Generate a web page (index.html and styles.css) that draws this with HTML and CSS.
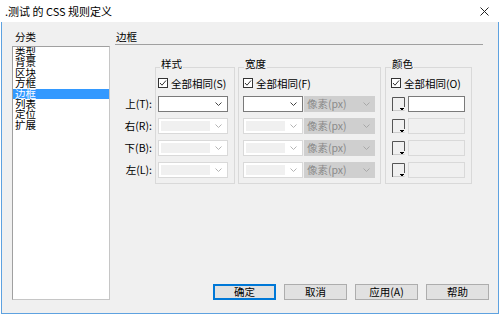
FILE: index.html
```html
<!DOCTYPE html>
<html lang="zh-CN">
<head>
  <meta charset="UTF-8" />
  <title>.测试 的 CSS 规则定义</title>
  <link rel="stylesheet" href="styles.css">
</head>
<body>

  <div class="window">
    <div class="titlebar">
      <span class="title">.测试 的 CSS 规则定义</span>
      <svg class="close" width="9" height="9" viewBox="0 0 9 9"><path d="M0.5 0.5 L8.5 8.5 M8.5 0.5 L0.5 8.5" stroke="#222" fill="none"/></svg>
    </div>

    <div class="content">
      <!-- category list -->
      <div class="category">
        <div class="cat-label">分类</div>
        <ul class="cat-list">
          <li>类型</li>
          <li>背景</li>
          <li>区块</li>
          <li>方框</li>
          <li class="selected">边框</li>
          <li>列表</li>
          <li>定位</li>
          <li>扩展</li>
        </ul>
      </div>

      <div class="panel">
        <div class="panel-title">边框</div>

        <div class="groups">
          <div class="side-labels">
            <div>上(T):</div>
            <div>右(R):</div>
            <div>下(B):</div>
            <div>左(L):</div>
          </div>

          <!-- style -->
          <fieldset class="group g-style">
            <legend>样式</legend>
            <div class="same">
              <svg class="check" width="10" height="10" viewBox="0 0 10 10"><rect x="0.5" y="0.5" width="9" height="9" fill="#fff" stroke="#333"/><path d="M2 5 L4 7.2 L8 2.5" fill="none" stroke="#333"/></svg>
              全部相同(S)
            </div>
            <div class="rows">
              <div class="row">
                <div class="select sel-style"><svg class="chev" width="7" height="4" viewBox="0 0 7 4"><path d="M0.5 0.5 L3.5 3.5 L6.5 0.5" fill="none" stroke="currentColor"/></svg></div>
              </div>
              <div class="row">
                <div class="select sel-style off"><span class="fill"></span><svg class="chev" width="7" height="4" viewBox="0 0 7 4"><path d="M0.5 0.5 L3.5 3.5 L6.5 0.5" fill="none" stroke="currentColor"/></svg></div>
              </div>
              <div class="row">
                <div class="select sel-style off"><span class="fill"></span><svg class="chev" width="7" height="4" viewBox="0 0 7 4"><path d="M0.5 0.5 L3.5 3.5 L6.5 0.5" fill="none" stroke="currentColor"/></svg></div>
              </div>
              <div class="row">
                <div class="select sel-style off"><span class="fill"></span><svg class="chev" width="7" height="4" viewBox="0 0 7 4"><path d="M0.5 0.5 L3.5 3.5 L6.5 0.5" fill="none" stroke="currentColor"/></svg></div>
              </div>
            </div>
          </fieldset>

          <!-- width -->
          <fieldset class="group g-width">
            <legend>宽度</legend>
            <div class="same">
              <svg class="check" width="10" height="10" viewBox="0 0 10 10"><rect x="0.5" y="0.5" width="9" height="9" fill="#fff" stroke="#333"/><path d="M2 5 L4 7.2 L8 2.5" fill="none" stroke="#333"/></svg>
              全部相同(F)
            </div>
            <div class="rows">
              <div class="row">
                <div class="select sel-width"><svg class="chev" width="7" height="4" viewBox="0 0 7 4"><path d="M0.5 0.5 L3.5 3.5 L6.5 0.5" fill="none" stroke="currentColor"/></svg></div>
                <div class="unit">像素(px)<svg class="chev" width="7" height="4" viewBox="0 0 7 4"><path d="M0.5 0.5 L3.5 3.5 L6.5 0.5" fill="none" stroke="currentColor"/></svg></div>
              </div>
              <div class="row">
                <div class="select sel-width off"><span class="fill"></span><svg class="chev" width="7" height="4" viewBox="0 0 7 4"><path d="M0.5 0.5 L3.5 3.5 L6.5 0.5" fill="none" stroke="currentColor"/></svg></div>
                <div class="unit">像素(px)<svg class="chev" width="7" height="4" viewBox="0 0 7 4"><path d="M0.5 0.5 L3.5 3.5 L6.5 0.5" fill="none" stroke="currentColor"/></svg></div>
              </div>
              <div class="row">
                <div class="select sel-width off"><span class="fill"></span><svg class="chev" width="7" height="4" viewBox="0 0 7 4"><path d="M0.5 0.5 L3.5 3.5 L6.5 0.5" fill="none" stroke="currentColor"/></svg></div>
                <div class="unit">像素(px)<svg class="chev" width="7" height="4" viewBox="0 0 7 4"><path d="M0.5 0.5 L3.5 3.5 L6.5 0.5" fill="none" stroke="currentColor"/></svg></div>
              </div>
              <div class="row">
                <div class="select sel-width off"><span class="fill"></span><svg class="chev" width="7" height="4" viewBox="0 0 7 4"><path d="M0.5 0.5 L3.5 3.5 L6.5 0.5" fill="none" stroke="currentColor"/></svg></div>
                <div class="unit">像素(px)<svg class="chev" width="7" height="4" viewBox="0 0 7 4"><path d="M0.5 0.5 L3.5 3.5 L6.5 0.5" fill="none" stroke="currentColor"/></svg></div>
              </div>
            </div>
          </fieldset>

          <!-- color -->
          <fieldset class="group g-color">
            <legend>颜色</legend>
            <div class="same">
              <svg class="check" width="10" height="10" viewBox="0 0 10 10"><rect x="0.5" y="0.5" width="9" height="9" fill="#fff" stroke="#333"/><path d="M2 5 L4 7.2 L8 2.5" fill="none" stroke="#333"/></svg>
              全部相同(O)
            </div>
            <div class="rows">
              <div class="row">
                <svg class="swatch" width="15" height="16" viewBox="0 0 15 16"><path d="M1.5 15 V1.5 H13.5 V11" fill="none" stroke="#555"/><path d="M2 14.5 H13.5" stroke="#ccc"/><path d="M9 12.5 H13 M10 13.5 H12" stroke="#000"/></svg>
                <div class="cfield"></div>
              </div>
              <div class="row">
                <svg class="swatch" width="15" height="16" viewBox="0 0 15 16"><path d="M1.5 15 V1.5 H13.5 V11" fill="none" stroke="#555"/><path d="M2 14.5 H13.5" stroke="#ccc"/><path d="M9 12.5 H13 M10 13.5 H12" stroke="#000"/></svg>
                <div class="cfield off"></div>
              </div>
              <div class="row">
                <svg class="swatch" width="15" height="16" viewBox="0 0 15 16"><path d="M1.5 15 V1.5 H13.5 V11" fill="none" stroke="#555"/><path d="M2 14.5 H13.5" stroke="#ccc"/><path d="M9 12.5 H13 M10 13.5 H12" stroke="#000"/></svg>
                <div class="cfield off"></div>
              </div>
              <div class="row">
                <svg class="swatch" width="15" height="16" viewBox="0 0 15 16"><path d="M1.5 15 V1.5 H13.5 V11" fill="none" stroke="#555"/><path d="M2 14.5 H13.5" stroke="#ccc"/><path d="M9 12.5 H13 M10 13.5 H12" stroke="#000"/></svg>
                <div class="cfield off"></div>
              </div>
            </div>
          </fieldset>
        </div>

        <div class="actions">
          <button class="default">确定</button>
          <button>取消</button>
          <button>应用(A)</button>
          <button>帮助</button>
        </div>
      </div>
    </div>
  </div>

</body>
</html>
```

FILE: styles.css
```css
/* Page */
body {
  margin: 0;
  background: #fff;
  font-family: "Noto Sans CJK SC", "Liberation Sans", sans-serif;
  font-size: 10.5px;
  color: #000;
}

* {
  box-sizing: border-box;
}

/* Dialog window */
.window {
  width: 498px;
  height: 314px;
  margin-left: 1px;
  display: flex;
  flex-direction: column;
}

.titlebar {
  height: 22px;
  flex: none;
  background: #fff;
  display: flex;
  align-items: center;
  justify-content: space-between;
  padding: 0 10px 0 4px;
}

.title {
  font-size: 11px;
  line-height: 14px;
}

.content {
  flex: 1;
  display: flex;
  background: #f0f0f0;
  border: 1px solid #5ea2e0;
  border-top: none;
  padding: 9px 9px 13px 10px;
}

/* Category list on the left */
.category {
  width: 98px;
  display: flex;
  flex-direction: column;
}

.cat-label {
  line-height: 12px;
  padding-left: 3px;
  margin-bottom: 3px;
}

.cat-list {
  flex: 1;
  margin: 0;
  padding: 0;
  list-style: none;
  background: #fff;
  border: 1px solid;
  border-color: #a0a0a0 #c6c6c6 #c6c6c6 #a0a0a0;
}

.cat-list li {
  height: 10.4px;
  line-height: 10.4px;
  padding-left: 2px;
}

.cat-list li.selected {
  background: #3399ff;
  color: #fff;
}

/* Right panel */
.panel {
  flex: 1;
  margin-left: 5px;
  display: flex;
  flex-direction: column;
}

.panel-title {
  line-height: 12px;
  padding: 0 0 1px 1px;
  margin-right: 6px;
  border-bottom: 1px solid #a0a0a0;
}

.groups {
  display: flex;
  margin-top: 13px;
}

.side-labels {
  width: 40px;
  padding: 38px 3px 0 0;
  display: flex;
  flex-direction: column;
  gap: 6px;
  text-align: right;
}

.side-labels div {
  height: 16px;
  line-height: 16px;
}

/* Group boxes */
.group {
  margin: 0;
  min-width: 0;
  border: 1px solid #d9d9d9;
  padding: 1px 4px 5px 4px;
}

.group legend {
  line-height: 12px;
  padding: 0 1px 6px;
  margin-left: 1px;
}

.g-style {
  width: 80px;
  padding-left: 2px;
}

.g-style legend {
  margin-left: 2px;
}

.g-width {
  width: 143px;
  margin-left: 3px;
}

.g-color {
  width: 87px;
  margin-left: 4px;
  padding-left: 5px;
}

.g-color legend {
  margin-left: 0;
}

.same {
  height: 12px;
  display: flex;
  align-items: center;
  gap: 3px;
  white-space: nowrap;
}

.check {
  flex: none;
}

.rows {
  margin-top: 7px;
  display: flex;
  flex-direction: column;
  gap: 6px;
}

.row {
  height: 16px;
  display: flex;
}

/* Drop-down boxes */
.select {
  height: 16px;
  border: 1px solid #7a7a7a;
  background: #fff;
  display: flex;
  align-items: center;
  justify-content: flex-end;
  padding: 2px 5px 2px 2px;
  color: #444;
}

.select.off {
  border-color: #d9d9d9;
  color: #b4b4b4;
}

.select .fill {
  flex: 1;
  align-self: stretch;
  background: #f0f0f0;
  margin-right: 5px;
}

.sel-style {
  width: 70px;
}

.sel-width {
  width: 60px;
}

.unit {
  width: 71px;
  height: 16px;
  margin-left: 1px;
  background: #cfcfcf;
  color: #8a8a8a;
  display: flex;
  align-items: center;
  justify-content: space-between;
  padding: 0 5px 0 3px;
  white-space: nowrap;
  line-height: 14px;
}

.unit .chev {
  color: #a8a8a8;
}

/* Colour pickers */
.swatch {
  flex: none;
}

.cfield {
  width: 57px;
  height: 16px;
  margin-left: 2px;
  border: 1px solid #7a7a7a;
  background: #fff;
}

.cfield.off {
  border-color: #d9d9d9;
  background: #f0f0f0;
}

/* Bottom buttons */
.actions {
  margin-top: auto;
  display: flex;
  justify-content: flex-end;
  gap: 8px;
}

.actions button {
  width: 63px;
  height: 16px;
  padding: 0;
  border: 1px solid #adadad;
  background: #e1e1e1;
  font-family: inherit;
  font-size: 10.5px;
  line-height: 14px;
  color: #000;
}

.actions button.default {
  border-color: #0078d7;
  box-shadow: inset 0 0 0 1px #0078d7;
}
```
